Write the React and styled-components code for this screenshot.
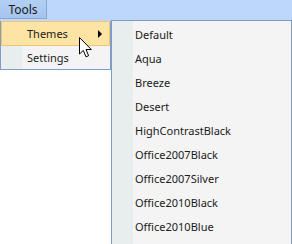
import React from 'react';
import styled, { createGlobalStyle } from 'styled-components';

const GlobalStyle = createGlobalStyle`
  html, body {
    margin: 0;
    padding: 0;
    background: #ffffff;
  }
  body {
    font-family: "Noto Sans", "Open Sans", sans-serif;
    font-size: 11px;
    color: #1b1b1b;
  }
`;

const themes = [
  'Default',
  'Aqua',
  'Breeze',
  'Desert',
  'HighContrastBlack',
  'Office2007Black',
  'Office2007Silver',
  'Office2010Black',
  'Office2010Blue',
];

const Screen = styled.div`
  position: relative;
  width: 292px;
  height: 244px;
  overflow: hidden;
  background: #ffffff;
`;

const MenuBar = styled.div`
  display: flex;
  height: 21px;
  background: #bcd7fb;
`;

const BarItem = styled.div`
  width: 47px;
  height: 19px;
  padding-top: 1px;
  box-sizing: border-box;
  display: flex;
  align-items: center;
  justify-content: center;
  background: linear-gradient(#b3cff4, #a5c4ee);
  border: 1px solid #89a8d2;
  border-top: none;
  border-left: none;
  font-size: 12px;
  color: #1a1a1a;
`;

const Menus = styled.div`
  display: flex;
  align-items: flex-start;
`;

const Dropdown = styled.div`
  width: ${p => p.$width}px;
  height: ${p => p.$height}px;
  margin-top: ${p => p.$lift}px;
  border: 1px solid #7f9cc6;
  border-top-width: ${p => (p.$noTop ? 0 : 1)}px;
  background: linear-gradient(to right, #e8eded 0, #e8eded ${p => p.$gutter}px, #f4f4f4 ${p => p.$gutter}px);
  padding: ${p => p.$pad};
  box-sizing: border-box;
`;

const Item = styled.div`
  display: flex;
  align-items: center;
  height: ${p => p.$h}px;
  padding-left: ${p => p.$indent}px;
  padding-right: 6px;
  box-sizing: border-box;
  background: ${p => (p.$active ? '#fde4a4' : 'transparent')};
  border: 1px solid ${p => (p.$active ? '#f1c46e' : 'transparent')};
  border-radius: 1px;
`;

const Label = styled.span`
  flex: 1;
  white-space: nowrap;
`;

const Arrow = styled.span`
  width: 0;
  height: 0;
  border-top: 4px solid transparent;
  border-bottom: 4px solid transparent;
  border-left: 4px solid #000;
  margin-right: 1px;
`;

const Cursor = styled.svg`
  position: absolute;
  left: 79px;
  top: 37px;
`;

export default function App() {
  return (
    <Screen>
      <GlobalStyle />
      <MenuBar>
        <BarItem>Tools</BarItem>
      </MenuBar>
      <Menus>
        <Dropdown $width={111} $gutter={21} $height={49} $lift={0} $pad="0 0 2px 0" $noTop>
          <Item $h={25} $indent={25} $active>
            <Label>Themes</Label>
            <Arrow />
          </Item>
          <Item $h={22} $indent={25}>
            <Label>Settings</Label>
          </Item>
        </Dropdown>
        <Dropdown $width={181} $gutter={21} $height={240} $lift={-1} $pad="1px 0 0 0">
          {themes.map(t => (
            <Item key={t} $h={24} $indent={22}>
              <Label>{t}</Label>
            </Item>
          ))}
        </Dropdown>
      </Menus>
      <Cursor width="14" height="22" viewBox="0 0 14 22">
        <path
          d="M0.5 0.5 L0.5 17 L4.3 13.4 L7 19.8 L9.6 18.7 L7 12.5 L12.3 12.5 Z"
          fill="#ffffff"
          stroke="#000000"
          strokeWidth="1"
        />
      </Cursor>
    </Screen>
  );
}
